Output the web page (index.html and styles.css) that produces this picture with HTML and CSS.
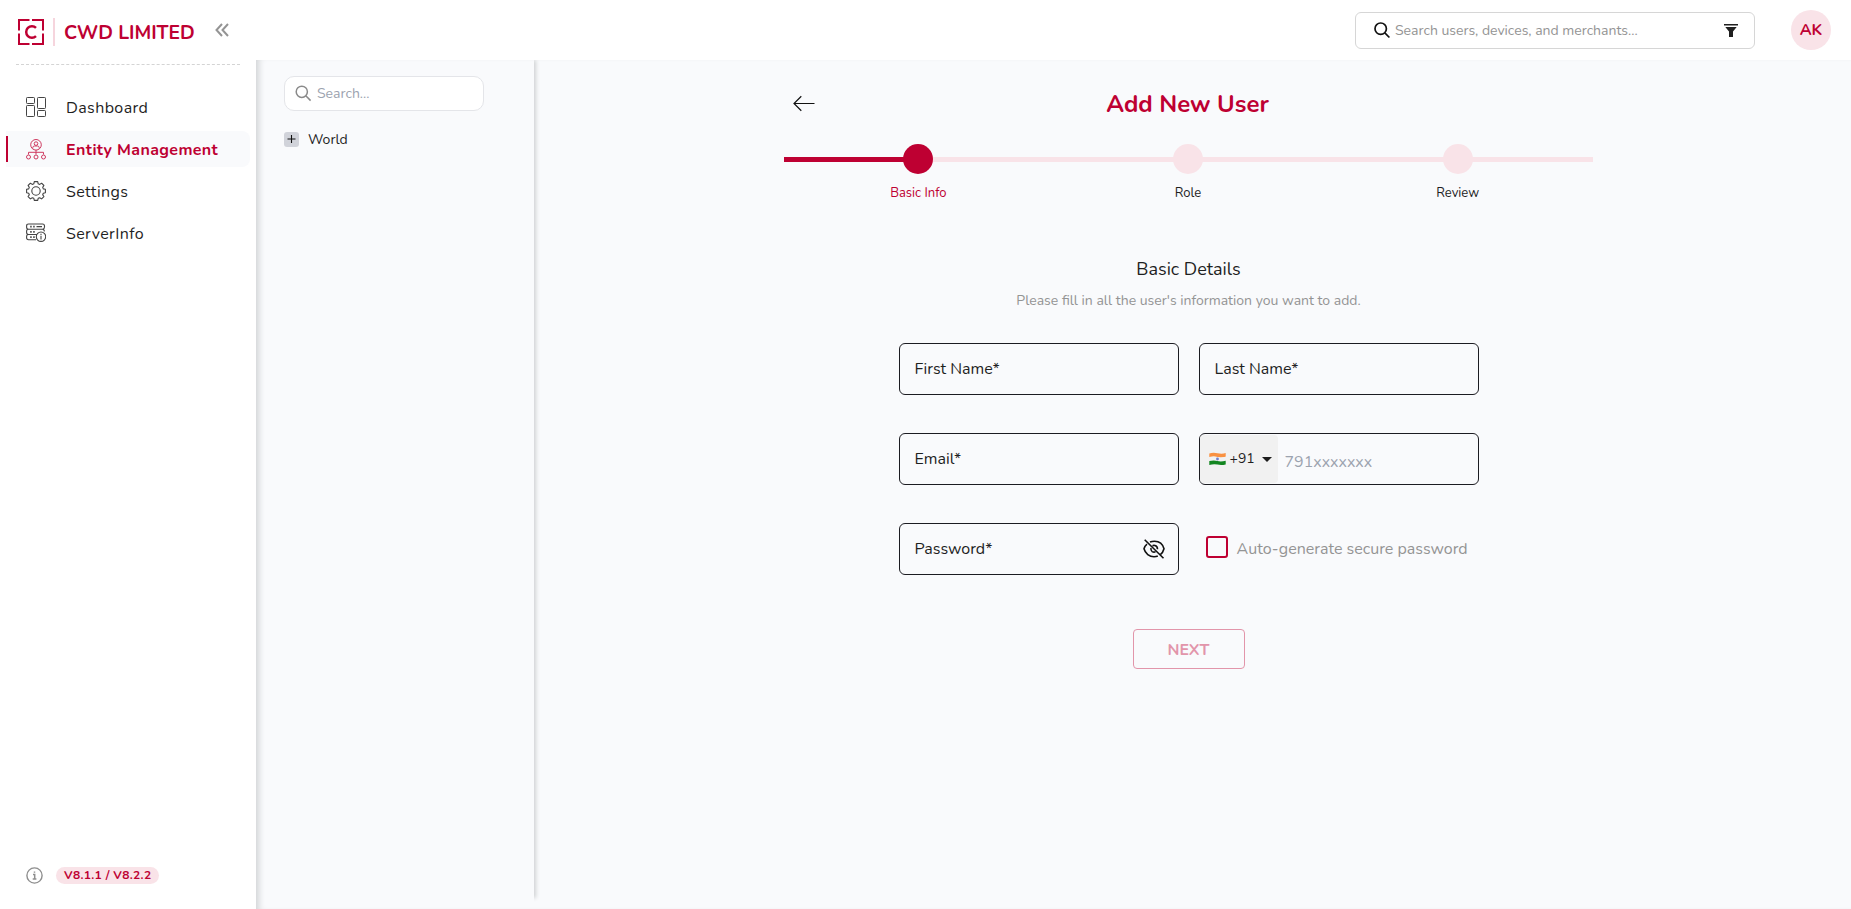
FILE: index.html
```
<!DOCTYPE html>
<html lang="en">
<head>
<meta charset="utf-8">
<title>Add New User</title>
<link rel="stylesheet" href="styles.css">
</head>
<body>
<aside class="sidebar">
  <div class="brand">
    <svg class="brand-mark" width="26" height="26" viewBox="0 0 26 26" fill="none" stroke="currentColor" stroke-width="2">
      <path d="M1 11.500V1H11.500M14 1H25V11.500M25 14.500V25H14M11.500 25H1V14.500"/>
      <path stroke-width="2.500" d="M18 8.800A5.800 5.800 0 1 0 18 17.200"/>
    </svg>
    <span class="brand-divider"></span>
    <span class="brand-name">CWD LIMITED</span>
    <svg class="collapse" width="14" height="14" viewBox="0 0 14 14" fill="none" stroke="currentColor" stroke-width="2"><path d="M7 1L1.500 7L7 13M13 1L7.500 7L13 13"/></svg>
  </div>
  <nav class="nav">
    <a class="nav-item">
      <svg width="20" height="20" viewBox="0 0 20 20" fill="none" stroke="currentColor" stroke-width="1"><rect x=".5" y=".5" width="8" height="6" rx=".8"/><rect x=".5" y="8.500" width="8" height="11" rx=".8"/><rect x="11.500" y=".5" width="8" height="11" rx=".8"/><rect x="11.500" y="13.500" width="8" height="6" rx=".8"/></svg>
      <span>Dashboard</span>
    </a>
    <a class="nav-item active">
      <svg width="20" height="21" viewBox="0 0 20 21" fill="none" stroke="currentColor" stroke-width="1"><circle cx="10" cy="5.800" r="5.300"/><circle cx="10" cy="4.600" r="1.800"/><path d="M6.800 9.500V8.500Q7 7 8.500 7H11.500Q13 7 13.200 8.500V9.500M10 11V15.500M2.500 15.500V13.300H17.500V15.500"/><circle cx="2.500" cy="18" r="2"/><circle cx="10" cy="18" r="2"/><circle cx="17.500" cy="18" r="2"/></svg>
      <span>Entity Management</span>
    </a>
    <a class="nav-item">
      <svg width="20" height="20" viewBox="0 0 20 20" fill="none" stroke="currentColor" stroke-width="1.100" stroke-linejoin="round"><circle cx="10" cy="10" r="4.200"/><path d="M8.300.6H11.700L12.200 2.800L13.700 3.400L15.600 2.200L17.900 4.500L16.700 6.400L17.300 7.900L19.400 8.300V11.700L17.300 12.200L16.700 13.700L17.900 15.600L15.600 17.900L13.700 16.700L12.200 17.300L11.700 19.400H8.300L7.800 17.300L6.300 16.700L4.400 17.900L2.100 15.600L3.300 13.700L2.700 12.200L.6 11.700V8.300L2.700 7.900L3.300 6.400L2.100 4.500L4.400 2.200L6.300 3.400L7.800 2.800Z"/></svg>
      <span>Settings</span>
    </a>
    <a class="nav-item">
      <svg width="20" height="20" viewBox="0 0 20 20" fill="none" stroke="currentColor" stroke-width="1.100"><path d="M2.500 6.200H16.500Q18.500 6 18.500 4V3Q18.500 1 16.500 1H2.500Q.6 1 .6 3V4.200Q.6 6.200 2.500 6.200ZM11 11.500H2.500Q.6 11.500 .6 9.500V8.200Q.6 6.200 2.500 6.200H16.500Q18.300 6.200 18.300 8.500M10 16.700H2.500Q.6 16.700 .6 14.700V13.500Q.6 11.500 2.500 11.500"/><circle cx="15" cy="13.700" r="4.700"/><path d="M15 12.800V16.500M15 10.700V11.900M10.500 3.600H16"/><path stroke-width="1.600" d="M4.200 3.600H5.700M7.200 3.600H8.700M4.200 8.900H5.700M7.200 8.900H8.700M4.200 14.100H5.700M7.200 14.100H8.700"/></svg>
      <span>ServerInfo</span>
    </a>
  </nav>
  <div class="version">
    <svg width="17" height="17" viewBox="0 0 17 17" fill="none" stroke="currentColor"><circle cx="8.500" cy="8.500" r="7.600" stroke-width="1.400"/><path stroke-width="1.500" d="M7 7.500H8.700V12M6.700 12H10.400M8.500 4.400V5.800"/></svg>
    <span class="version-pill">V8.1.1 / V8.2.2</span>
  </div>
</aside>
<div class="content">
  <header class="topbar">
    <div class="global-search">
      <svg width="18" height="18" viewBox="0 0 18 18" fill="none" stroke="#111" stroke-width="1.700"><circle cx="6.700" cy="6.700" r="5.700"/><path d="M10.800 10.800L15.400 15.500"/></svg>
      <span class="global-placeholder">Search users, devices, and merchants...</span>
      <svg width="14" height="13" viewBox="0 0 14 13" fill="#1f1f1f"><path d="M0 0H14V1.500H0ZM1.300 3H12.700L9 7.500V13H5V7.500Z"/></svg>
    </div>
    <div class="avatar">AK</div>
  </header>
  <div class="workspace">
    <section class="tree">
      <div class="tree-search">
        <svg width="17" height="17" viewBox="0 0 17 17" fill="none" stroke="#8a8a8a" stroke-width="1.500"><circle cx="6.800" cy="6.800" r="5.600"/><path d="M10.800 10.800L15.600 15.600"/></svg>
        <span>Search...</span>
      </div>
      <div class="tree-node">
        <svg width="15" height="15" viewBox="0 0 15 15"><rect width="15" height="15" rx="3" fill="#d1d3da"/><path d="M7.500 3V11M3.500 7H11.500" stroke="#111" stroke-width="1.100"/></svg>
        <span>World</span>
      </div>
    </section>
    <main class="main">
      <div class="wizard">
        <div class="title-row">
          <svg class="back" width="22" height="18" viewBox="0 0 22 18" fill="none" stroke="#111" stroke-width="1.200"><path d="M21.500 8.500H1M8.300 1.300L1 8.500L8.300 15.700"/></svg>
          <h1>Add New User</h1>
        </div>
        <ol class="steps">
          <li class="step current"><i class="dot"></i><span>Basic Info</span></li>
          <li class="step"><i class="dot"></i><span>Role</span></li>
          <li class="step"><i class="dot"></i><span>Review</span></li>
        </ol>
        <h2>Basic Details</h2>
        <p class="hint">Please fill in all the user's information you want to add.</p>
        <form class="form">
          <div class="field">First Name*</div>
          <div class="field">Last Name*</div>
          <div class="field">Email*</div>
          <div class="field phone">
            <div class="dial">
              <svg width="17" height="14" viewBox="0 0 17 14"><path fill="#f99141" d="M.3 1.500Q4 .2 8.500 1.200T16.700 1V4.700Q12 6 8.500 5T.3 5Z"/><path fill="#f1f1f1" d="M.3 5Q5 4 8.500 5T16.700 4.700V9Q12 10 8.500 9T.3 9Z"/><path fill="#128520" d="M.3 9Q5 8 8.500 9T16.700 8.700V12.500Q12 13.500 8.500 12.600T.3 12.900Z"/><circle cx="8.500" cy="7" r="1.400" fill="#6d7fd0"/></svg>
              <span>+91</span>
              <svg class="caret" width="10" height="5" viewBox="0 0 10 5"><path d="M0 0H10L5 5Z" fill="#1c1c1c"/></svg>
            </div>
            <span class="phone-placeholder">791xxxxxxx</span>
          </div>
          <div class="field password">
            <span>Password*</span>
            <svg width="22" height="20" viewBox="0 0 22 20" fill="none" stroke="#111" stroke-width="1.600"><path d="M7 3Q9 2.200 11.500 2.200C16 2.200 19.800 5 21 9.800C20.400 12.300 19 14.300 17.300 15.600M14.800 17Q13.200 17.700 11 17.700C6.500 17.700 2.200 14.500 1 9.800Q1.800 7 4 5.200"/><path d="M9.500 6.700Q10.500 6.200 12 6.600Q14.500 7.300 14.500 10.300M8 9Q7.500 11.500 9.200 12.600Q10.800 13.500 12.500 12.800M1.700 .8L20.500 19.300"/></svg>
          </div>
          <label class="auto"><i class="box"></i><span>Auto-generate secure password</span></label>
        </form>
        <button class="next" type="button">NEXT</button>
      </div>
    </main>
  </div>
</div>
</body>
</html>
```
FILE: styles.css
```
* { box-sizing: border-box; }
body {
  margin: 0;
  height: 100vh;
  display: flex;
  overflow: hidden;
  background: #f9fafc;
  color: #1f1f1f;
  font-family: Nunito, Lato, sans-serif;
  font-size: 16px;
}
svg { display: block; flex: none; }

.sidebar {
  width: 256px;
  flex: none;
  display: flex;
  flex-direction: column;
  background: #fff;
}
.brand {
  height: 65px;
  margin: 0 16px;
  padding-bottom: 1px;
  display: flex;
  align-items: center;
  border-bottom: 1px dashed #d4d4d4;
  color: #be0032;
}
.brand-mark { margin-left: 2px; }
.brand-divider { width: 2px; height: 28px; margin: 0 9px; background: #f6d5dd; }
.brand-name { padding-top: 2px; font-size: 19.3px; font-weight: 700; line-height: 26px; white-space: nowrap; }
.collapse { margin: 0 0 3px 20px; color: #949494; }
.nav { margin-top: 24px; display: flex; flex-direction: column; gap: 6px; }
.nav-item {
  height: 36px;
  margin: 0 6px;
  padding-left: 20px;
  display: flex;
  align-items: center;
  gap: 20px;
  border-radius: 0 8px 8px 0;
  letter-spacing: .38px;
  line-height: 22px;
}
.nav-item span { padding-top: 2px; }
.nav-item svg { color: #444; }
.nav-item.active {
  padding-left: 0;
  background: #f9fafc;
  color: #be0032;
  font-weight: 700;
  gap: 0;
}
.nav-item.active::before { content: ""; width: 2px; height: 26px; margin-right: 18px; background: #be0032; }
.nav-item.active svg { margin-right: 20px; color: #cf3a60; }
.version { margin: auto 0 25px 26px; display: flex; align-items: center; gap: 13px; color: #8e8e8e; }
.version-pill {
  height: 17px;
  padding: 0 8px;
  border-radius: 9px;
  background: #f9e3e8;
  color: #be0032;
  font-size: 12px;
  font-weight: 700;
  letter-spacing: .33px;
  line-height: 17px;
}

.content { flex: 1; display: flex; flex-direction: column; min-width: 0; }
.topbar { height: 60px; flex: none; display: flex; justify-content: flex-end; padding: 0 20px 0 0; background: #fff; }
.global-search {
  width: 400px;
  height: 37px;
  margin: 12px 36px 0 0;
  padding: 0 16px 0 18px;
  display: flex;
  align-items: center;
  border: 1px solid #d6d6d6;
  border-radius: 6px;
}
.global-placeholder { flex: 1; margin-left: 3px; color: #949494; font-size: 14px; }
.avatar {
  width: 40px;
  height: 40px;
  margin-top: 10px;
  border-radius: 50%;
  background: #f9e3e8;
  color: #be0032;
  font-weight: 700;
  line-height: 40px;
  text-align: center;
}
.workspace { flex: 1; display: flex; overflow: hidden; box-shadow: inset 7px 0 6px -4px #d2d4d6; }
.tree { width: 278px; height: 842px; flex: none; padding: 16px 0 0 28px; box-shadow: 4px -2px 4px -2px #d0d2d4; }
.tree-search {
  width: 200px;
  height: 35px;
  padding-left: 10px;
  display: flex;
  align-items: center;
  gap: 5px;
  border: 1px solid #e4e5e9;
  border-radius: 10px;
  background: #fff;
  color: #9ca3af;
  font-size: 14px;
}
.tree-node { margin-top: 19px; display: flex; align-items: center; gap: 9px; font-size: 14px; }

.main { flex: 1; display: flex; justify-content: center; padding: 0 9px 0 0; }
.wizard { width: 809px; display: flex; flex-direction: column; align-items: center; }
.title-row { width: 100%; height: 33px; margin-top: 27px; display: flex; align-items: center; }
.back { margin-left: 9px; }
h1 { flex: 1; margin: 2px 32px 0 0; color: #be0032; font-size: 24px; font-weight: 700; line-height: 33px; text-align: center; }
.steps {
  width: 100%;
  margin: 24px 0 0;
  padding: 0;
  display: flex;
  list-style: none;
  background: linear-gradient(#f9e3e8, #f9e3e8) 0 13px / 100% 5px no-repeat;
}
.step { flex: 1; display: flex; flex-direction: column; align-items: center; gap: 10px; font-size: 13px; line-height: 18px; }
.step.current { color: #be0032; background: linear-gradient(#be0032, #be0032) 0 13px / 50% 5px no-repeat; }
.dot { width: 30px; height: 30px; border-radius: 50%; background: #f9e3e8; }
.current .dot { background: #be0032; }
h2 { margin: 55px 0 0 1px; font-size: 18px; font-weight: 400; line-height: 25px; }
.hint { margin: 9px 0 0 1px; color: #949494; font-size: 14px; line-height: 19px; }
.form { margin: 33px 0 0 1px; display: grid; grid-template-columns: 280px 280px; gap: 38px 20px; }
.field { height: 52px; padding-left: 15px; display: flex; align-items: center; border: 1px solid #1c1c22; border-radius: 6px; line-height: 22px; }
.phone { padding-left: 0; }
.dial { width: 78px; height: 48px; padding-left: 9px; display: flex; align-items: center; background: #f1f1f1; border-radius: 4px; font-size: 14px; }
.dial span { margin-left: 4px; }
.caret { margin-left: 7px; }
.phone-placeholder { margin: 5px 0 0 7px; color: #9ca3af; }
.password { padding-right: 13px; justify-content: space-between; }
.auto { display: flex; align-items: center; padding-left: 7px; color: #949494; white-space: nowrap; }
.box { width: 22px; height: 22px; margin: 0 9px 4px 0; border: 2px solid #be0032; border-radius: 3px; }
.next {
  width: 112px;
  height: 40px;
  margin: 54px 0 0 1px;
  padding: 2px 0 0;
  border: 1px solid #e295aa;
  border-radius: 4px;
  background: transparent;
  color: #e295aa;
  font: 700 16px/22px Nunito, Lato, sans-serif;
}
```
